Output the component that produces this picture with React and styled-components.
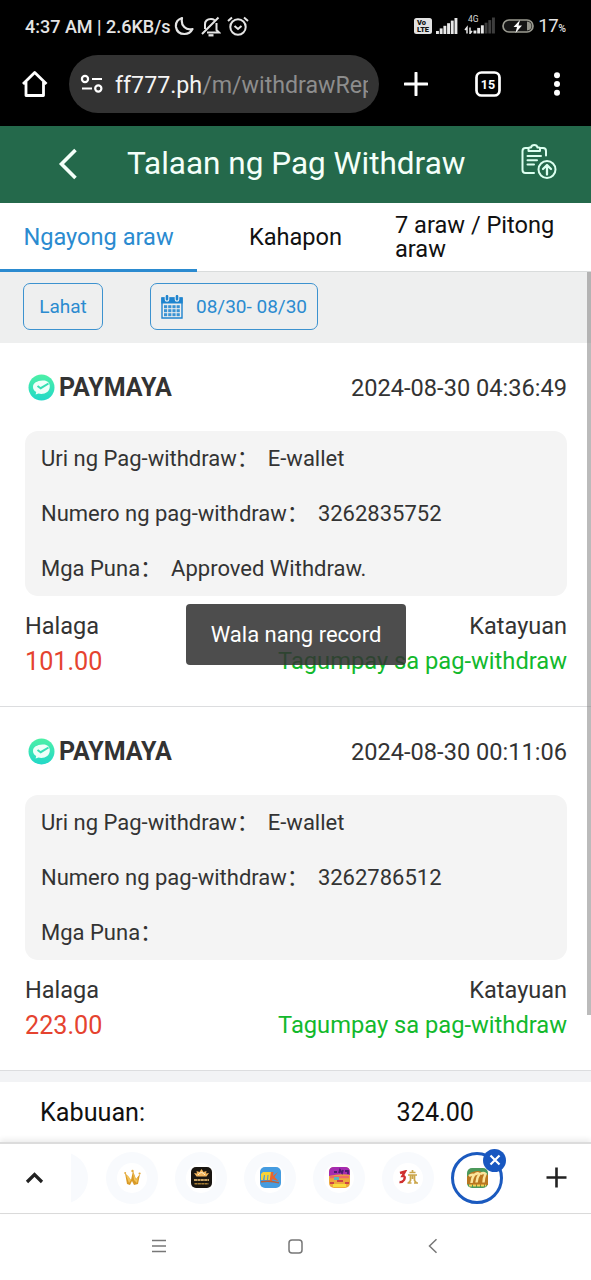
import React from "react";
import styled, { createGlobalStyle } from "styled-components";

const Global = createGlobalStyle`
  * { box-sizing: border-box; }
  body { margin: 0; background: #fff; font-family: Roboto, "Noto Sans CJK SC", sans-serif; }
  svg { display: block; flex: none; }
`;

const Screen = styled.div`
  width: 591px;
  height: 1280px;
  overflow: hidden;
  display: flex;
  flex-direction: column;
  position: relative;
  background: #fff;
  color: #333;
`;

const Text = styled.span`
  font-size: ${(p) => p.$size}px;
  letter-spacing: ${(p) => p.$ls || 0}px;
  color: ${(p) => p.$color || "inherit"};
  font-weight: ${(p) => p.$weight || 400};
  white-space: nowrap;
`;

const StatusBar = styled.div`
  height: 52px;
  flex: none;
  background: #000;
  color: #e4e4e4;
  display: flex;
  align-items: center;
  padding: 0 25px 0 25px;
`;
const StatusIcons = styled.div`
  display: flex;
  align-items: center;
  gap: 6px;
  margin-left: 3px;
`;
const StatusRight = styled.div`
  display: flex;
  align-items: center;
  margin-left: auto;
`;
const BatteryLevel = styled.div`
  display: flex;
  align-items: baseline;
  margin-left: 4px;
`;
const Signal = styled.svg`
  margin-left: ${(p) => p.$gap}px;
  margin-top: ${(p) => p.$lift || 0}px;
`;

const BrowserBar = styled.div`
  height: 74px;
  flex: none;
  background: #000;
  display: flex;
  align-items: center;
  padding: 0 28px 10px 20px;
  color: #fff;
`;
const AddressPill = styled.div`
  width: 310px;
  height: 58px;
  margin-left: 19px;
  border-radius: 29px;
  background: #333;
  display: flex;
  align-items: center;
  padding: 0 11px 0 11px;
`;
const Address = styled.div`
  width: 254px;
  overflow: hidden;
  white-space: nowrap;
  margin-left: 11px;
  font-size: 23.2px;
  line-height: 32px;
  padding-top: 1px;
  color: #8d8d8d;
  b { font-weight: 400; color: #f4f4f4; }
`;
const BrowserActions = styled.div`
  flex: 1;
  display: flex;
  align-items: center;
  padding-left: 25px;
  svg:nth-child(2) { margin-left: 47px; }
  svg:nth-child(3) { margin-left: 50px; }
`;

const AppHeader = styled.header`
  height: 77px;
  flex: none;
  background: #24694b;
  display: flex;
  align-items: center;
  color: #f4fff9;
  padding: 0 34px 2px 58px;
  > svg:last-child { margin-bottom: 4px; }
`;
const Title = styled.h1`
  margin: 0;
  flex: 1;
  padding-left: 49px;
  font-size: 31.5px;
  font-weight: 400;
  white-space: nowrap;
`;

const Tabs = styled.nav`
  height: 69px;
  flex: none;
  display: grid;
  grid-template-columns: repeat(3, 197px);
  border-bottom: 1px solid #d9dcdc;
`;
const Tab = styled.div`
  display: flex;
  align-items: center;
  justify-content: center;
  height: 69px;
  color: ${(p) => (p.$active ? "#2b8bd0" : "#111")};
  border-bottom: 3px solid ${(p) => (p.$active ? "#2b8bd0" : "transparent")};
  padding-top: 3px;
  font-size: 23.6px;
  line-height: 23.5px;
`;
const TabLabel = styled.span`
  width: ${(p) => (p.$wide ? "195px" : "auto")};
`;

const Filters = styled.div`
  height: 71px;
  flex: none;
  background: #eeefef;
  display: flex;
  align-items: flex-start;
  padding: 11px 0 0 23px;
  gap: 47px;
`;
const FilterButton = styled.button`
  width: ${(p) => p.$width}px;
  height: 47px;
  border: 1.3px solid #3c92cf;
  border-radius: 7px;
  background: transparent;
  color: #2b8bd0;
  font: 400 19px Roboto, sans-serif;
  display: flex;
  align-items: center;
  justify-content: center;
  gap: 13px;
  padding: 0;
  white-space: nowrap;
`;

const Record = styled.section`
  height: 364px;
  flex: none;
  padding: 0 24px 0 25px;
  border-bottom: 1px solid #dcdddf;
`;
const RecordHead = styled.div`
  height: 88px;
  display: flex;
  align-items: center;
  justify-content: space-between;
  padding: 1px 0 0 3px;
`;
const Brand = styled.div`
  display: flex;
  align-items: center;
  gap: 4px;
`;
const Details = styled.div`
  background: #f4f4f4;
  border-radius: 13px;
  height: 165px;
  padding-left: 16px;
`;
const Detail = styled.div`
  height: 55px;
  display: flex;
  align-items: center;
  font-size: 22px;
  line-height: 26px;
  white-space: pre;
  span { margin-left: 9px; }
`;
const Summary = styled.div`
  display: flex;
  justify-content: space-between;
  padding-top: 13px;
`;
const SummaryCol = styled.div`
  display: flex;
  flex-direction: column;
  align-items: ${(p) => (p.$end ? "flex-end" : "flex-start")};
  line-height: 35px;
`;

const Total = styled.div`
  height: 71px;
  flex: none;
  border-top: 11px solid #f2f3f5;
  display: flex;
  align-items: center;
  color: #111;
  padding: 1px 117px 0 40px;
  justify-content: space-between;
`;

const TabStrip = styled.div`
  height: 72px;
  flex: none;
  border-top: 2px solid #dcdcdc;
  border-bottom: 1px solid #dadada;
  box-shadow: 0 -3px 5px rgba(0, 0, 0, 0.07);
  display: flex;
  align-items: center;
  padding: 0 0 2px 25px;
  background: #fff;
`;
const Peek = styled.div`
  width: 17px;
  height: 52px;
  margin-left: 27px;
  overflow: hidden;
  display: flex;
  justify-content: flex-end;
`;
const SiteList = styled.div`
  display: flex;
  gap: 17px;
  margin-left: 18px;
`;
const Site = styled.div`
  width: 52px;
  height: 52px;
  flex: none;
  border-radius: 50%;
  position: relative;
  background: ${(p) => (p.$active ? "#fff" : "#f8fafd")};
  border: ${(p) => (p.$active ? "3px solid #1b5abf" : "0")};
  display: flex;
  align-items: center;
  justify-content: center;
`;
const SiteFace = styled.span`
  width: 30px;
  height: 30px;
  border-radius: 50%;
  background: #fff;
  display: flex;
  align-items: center;
  justify-content: center;
`;
const CloseBadge = styled.span`
  position: absolute;
  top: -6px;
  right: -6px;
  width: 23px;
  height: 23px;
  border-radius: 50%;
  background: #1857c0;
  display: flex;
  align-items: center;
  justify-content: center;
`;
const NewTab = styled.div`
  margin-left: 43px;
`;

const SystemNav = styled.div`
  flex: 1;
  display: flex;
  align-items: center;
  padding: 0 152px 2px 151px;
  svg:nth-child(2) { margin-left: 121px; }
  svg:nth-child(3) { margin-left: 125px; }
`;

const Toast = styled.div`
  position: absolute;
  left: 186px;
  top: 604px;
  width: 220px;
  height: 61px;
  border-radius: 4px;
  background: rgba(50, 50, 50, 0.87);
  color: #fff;
  display: flex;
  align-items: center;
  justify-content: center;
`;
const ScrollThumb = styled.div`
  position: absolute;
  right: 0;
  top: 272px;
  width: 4px;
  height: 743px;
  background: rgba(120, 120, 120, 0.5);
`;

const PayMark = () => (
  <svg width="27" height="27" viewBox="0 0 27 27">
    <defs>
      <linearGradient id="pay" x1="0" y1="0" x2="0" y2="1">
        <stop offset="0" stopColor="#4df0a6" />
        <stop offset="1" stopColor="#22d8c8" />
      </linearGradient>
    </defs>
    <circle cx="13.5" cy="13.5" r="13" fill="url(#pay)" />
    <path d="M14.500 6.500c4.500-.4 7.300 2 7.300 5.800 0 5-4 7.700-8.500 7.700-1 0-2 0-2.800-.4L7.600 20.500l.6-2.500C6 16.800 5 15 5 13c0-4 4-6.200 9.500-6.500z" fill="#effff9" />
    <path d="M9.500 12l3.200 2.200L20.500 9.500" fill="none" stroke="#35dfb4" strokeWidth="2" />
  </svg>
);

const CalendarIcon = () => (
  <svg width="22" height="24" viewBox="0 0 22 24">
    <path d="M1 3h20v20H1z" fill="none" stroke="#1e84cf" strokeWidth="1.4" />
    <path d="M.3 2.500h21.400V8.500H.3z" fill="#1e84cf" />
    <path d="M6 0v4.500M16 0v4.500" stroke="#eeefef" strokeWidth="4.600" strokeLinecap="round" />
    <path d="M6 1.200v3M16 1.200v3" stroke="#1e84cf" strokeWidth="2.600" strokeLinecap="round" />
    {[10.2, 14.2, 18.2].map((y) =>
      [3, 7.2, 11.4, 15.6].map((x) => (
        <rect key={`${x}-${y}`} x={x} y={y} width="3.200" height="3" fill="#3992d3" />
      ))
    )}
  </svg>
);

const HistoryIcon = () => (
  <svg width="36" height="36" viewBox="0 0 36 36" fill="none" stroke="#dcfff0" strokeWidth="2" strokeLinecap="round" strokeLinejoin="round">
    <path d="M7.500 4H4.500Q1.500 4 1.500 7V26Q1.500 29 4.500 29H13M19 4h3Q25 4 25 7V11.500" />
    <path d="M7.500 7V4.500q0-1 1-1h1.500Q10.500 1 13.300 1T16.500 3.500H18q1 0 1 1V7z" />
    <path d="M6.500 12H20M6.500 16.200H16M6.500 20.500H13" />
    <circle cx="26" cy="25.500" r="8.500" />
    <path d="M26 30.500V21.500M22 25l4-4 4 4" strokeWidth="2.300" />
  </svg>
);

const bars = (fade) => [0, 1, 2, 3, 4, 5].map((i) => (
  <rect key={i} x={i * 3.7} y={14 - i * 2.6} width="2.900" height={3 + i * 2.6} fill={fade && i > 2 ? "#3d3d3d" : "#e8e8e8"} />
));

const icons = {
  crown: (
    <svg width="17" height="17" viewBox="0 0 17 17">
      <path d="M1 4l3 3 3 4 2-9 3 8 4-5-2 10-4 1-2-4-2 4-3-1z" fill="#d99a27" />
      <path d="M2 6l3 8 2-3-3-4zM9 3l1 8 3 3 1-6-2 3z" fill="#f2c45a" />
      <circle cx="8.500" cy="2" r="1.200" fill="#e3a93b" />
      <circle cx="1.200" cy="4" r="1" fill="#e3a93b" />
      <circle cx="15.600" cy="4.500" r="1.100" fill="#e3a93b" />
    </svg>
  ),
  lotus: (
    <svg width="21" height="21" viewBox="0 0 21 21">
      <rect width="21" height="21" rx="5" fill="#1a1611" />
      <path d="M10.500 2l2 3 3-1-.5 2.500 3-.5-2.500 3.500H5.500L3 6l3 .5L5.500 4l3 1z" fill="#f1b45d" />
      <path d="M7 8q3.500-5 7 0" fill="none" stroke="#fff0ce" />
      <path d="M3 13h15" stroke="#c7a264" strokeWidth="1.800" strokeDasharray="3 .4" />
      <path d="M3.500 16.800h14" stroke="#a57d35" strokeWidth="1.600" strokeDasharray="3 .4" />
    </svg>
  ),
  mk: (
    <svg width="21" height="21" viewBox="0 0 21 21">
      <rect width="21" height="21" rx="5" fill="#459ce0" />
      <path d="M1 7l2-2h8l-.5 8H8l.5-5H7.500L7 13H4.500L5 8H4l-1 5H1z" fill="#f9d335" />
      <path d="M11 5h2.500l-.5 4L18 5l-3.500 5 4.500 4.500-5.500-2-1-1-.5 3H9.500z" fill="#e8652d" />
      <path d="M1 14.800q9-1.500 18 1" fill="none" stroke="#bd5e35" strokeWidth="1.400" />
    </svg>
  ),
  fiesta: (
    <svg width="21" height="21" viewBox="0 0 21 21">
      <rect width="21" height="21" rx="5" fill="#eda83b" />
      <path d="M0 9V5q0-5 5-5h11q5 0 5 5v3q-9-2-21 1z" fill="#a52bb0" />
      <path d="M5 5h3M10 6l1-3 2 3 1-3M16 4h3v3" fill="none" stroke="#4c1a70" strokeWidth="1.800" />
      <path d="M1 10h19" stroke="#ef6a68" strokeWidth="2.500" />
      <path d="M5 10h5v3H5z" fill="#58b9bd" />
      <path d="M1 16h4M16 16h4M8 14h6" stroke="#ce4344" strokeWidth="2" />
      <path d="M4 18.500h13" stroke="#f9dc3d" strokeWidth="3" />
    </svg>
  ),
  three: (
    <svg width="21" height="15" viewBox="0 0 21 15">
      <path d="M2 3l5-1.500L4.500 6q3.500-.2 1.500 4-1.500 2.500-4.500 2" fill="none" stroke="#cf2f2f" strokeWidth="2.400" />
      <path d="M10 5h9M11.500 2.500h6M14.500 0v3M12.500 5v5.500l-2 2.500M16.500 5v5.500l2 2.500M9.500 13h4M16 13h4M14.500 5v4" stroke="#cba64b" strokeWidth="1.700" fill="none" />
    </svg>
  ),
  sevens: (
    <svg width="21" height="20" viewBox="0 0 21 20">
      <rect width="21" height="20" rx="5" fill="#4b995b" />
      <path d="M0 9q4-7 12-6l9 4v10q-10 2-21-1z" fill="#b97720" />
      <path d="M2 8q2.500-2 5-1Q5 10 4.500 15M8 6.500q2-2 4.500-.5Q10 9 9.500 14.500M13.500 6q3-2 5 0-2 4-2 8.500" fill="none" stroke="#fbe59c" strokeWidth="2.500" />
      <path d="M2 17.500h17" stroke="#f3d258" strokeWidth="1.800" strokeDasharray="3 1" />
    </svg>
  ),
};

const records = [
  { time: "2024-08-30 04:36:49", number: "3262835752", note: "Approved Withdraw.", amount: "101.00" },
  { time: "2024-08-30 00:11:06", number: "3262786512", note: "", amount: "223.00" },
];

export default function App() {
  return (
    <Screen>
      <Global />
      <StatusBar>
        <Text $size={18} $weight={500}>4:37 AM | 2.6KB/s</Text>
        <StatusIcons>
          <svg width="21" height="20" viewBox="0 0 21 20" fill="none" stroke="#e4e4e4" strokeWidth="2.200" strokeLinejoin="round">
            <path d="M8 2C3.500 3.500 1.500 7 2 11c.7 4.500 4.200 7 8.500 7 3.500 0 6.500-2 8-5C12 14.500 6.500 10 8 2z" />
          </svg>
          <svg width="20" height="21" viewBox="0 0 20 21" fill="none" stroke="#e4e4e4" strokeWidth="2">
            <path d="M1 18L17.500 1.500M4 13V8.500Q4 3 10 3q2 0 3.500 1M15.500 7v7l2.500 2.500H6" />
            <path d="M7.500 19.300h5" strokeWidth="2.300" />
          </svg>
          <svg width="22" height="20" viewBox="0 0 22 20" fill="none" stroke="#e4e4e4" strokeWidth="2">
            <circle cx="11" cy="11" r="7.700" />
            <path d="M1 5l4-3.500M21 5l-4-3.500M7.500 10l3.500 3 3.500-3" />
          </svg>
        </StatusIcons>
        <StatusRight>
          <svg width="18" height="16" viewBox="0 0 18 16">
            <rect width="18" height="16" rx="2.500" fill="#e2e2e2" />
            <text x="3" y="7.200" fontSize="7.500" fontWeight="900" fontFamily="Roboto" fill="#111">Vo</text>
            <text x="3" y="14" fontSize="7.500" fontWeight="900" fontFamily="Roboto" fill="#111" textLength="12">LTE</text>
          </svg>
          <Signal $gap={4} $lift={-2} width="22" height="17" viewBox="0 0 22 17">{bars(false)}</Signal>
          <Signal $gap={6} $lift={-4} width="32" height="20" viewBox="0 0 32 20">
            <g transform="translate(9.500 2.500)">{bars(true)}</g>
            <rect x="3" y="0" width="12" height="9" fill="#000" />
            <text x="4" y="7.500" fontSize="8.500" fontFamily="Roboto" fill="#d8d8d8">4G</text>
            <path d="M3 19.500v-6l-2 2.500M6 13.500v6l2-2.500" stroke="#e8e8e8" strokeWidth="1.500" fill="none" />
          </Signal>
          <Signal $gap={6} width="32" height="14" viewBox="0 0 32 14">
            <rect x="1" y="1" width="30" height="12" rx="6" fill="#151515" stroke="#9a9a90" strokeWidth="1.700" />
            <path d="M25 2.500q4.500.5 4.500 4.500T25 11.500z" fill="#96968d" />
            <path d="M18 1l-6.500 7H15l-1.500 6L20 6.500h-3.500z" fill="#fff" />
          </Signal>
          <BatteryLevel>
            <Text $size={18.5} $ls={-0.4}>17</Text>
            <Text $size={10.5} $weight={500}>%</Text>
          </BatteryLevel>
        </StatusRight>
      </StatusBar>

      <BrowserBar>
        <svg width="30" height="30" viewBox="0 0 30 30" fill="none" stroke="#fff" strokeWidth="2.800" strokeLinejoin="round">
          <path d="M3 15L14.700 3.500 26.500 15M6 13v13.500h17.500V13" />
        </svg>
        <AddressPill>
          <svg width="24" height="20" viewBox="0 0 24 20" fill="none" stroke="#fff" strokeWidth="2.200">
            <circle cx="5" cy="5" r="3.100" /><path d="M12 5h10M2 14.500h10" /><circle cx="18.300" cy="14.500" r="3.100" />
          </svg>
          <Address><b>ff777.ph</b>/m/withdrawReport</Address>
        </AddressPill>
        <BrowserActions>
          <svg width="24" height="24" viewBox="0 0 24 24" stroke="#fff" strokeWidth="3"><path d="M12 1v22M1 12h22" strokeLinecap="round" /></svg>
          <svg width="26" height="26" viewBox="0 0 26 26">
            <rect x="1.500" y="1.500" width="23" height="23" rx="5" fill="none" stroke="#fff" strokeWidth="2.700" />
            <text x="13" y="17.500" textAnchor="middle" fontFamily="Roboto" fontWeight="700" fontSize="12.500" fill="#fff">15</text>
          </svg>
          <svg width="12" height="24" viewBox="0 0 12 24" fill="#fff"><circle cx="6" cy="3.200" r="3" /><circle cx="6" cy="12" r="3" /><circle cx="6" cy="20.800" r="3" /></svg>
        </BrowserActions>
      </BrowserBar>

      <AppHeader>
        <svg width="20" height="32" viewBox="0 0 20 32" fill="none" stroke="#f4fff9" strokeWidth="3.600"><path d="M17.500 2L3.500 16l14 14" /></svg>
        <Title>Talaan ng Pag Withdraw</Title>
        <HistoryIcon />
      </AppHeader>

      <Tabs>
        <Tab $active><TabLabel>Ngayong araw</TabLabel></Tab>
        <Tab><TabLabel>Kahapon</TabLabel></Tab>
        <Tab><TabLabel $wide>7 araw / Pitong araw</TabLabel></Tab>
      </Tabs>

      <Filters>
        <FilterButton $width={80}>Lahat</FilterButton>
        <FilterButton $width={168}><CalendarIcon />08/30- 08/30</FilterButton>
      </Filters>

      {records.map((r) => (
        <Record key={r.number}>
          <RecordHead>
            <Brand><PayMark /><Text $size={25} $weight={700}>PAYMAYA</Text></Brand>
            <Text $size={23.6}>{r.time}</Text>
          </RecordHead>
          <Details>
            <Detail>Uri ng Pag-withdraw：<span>E-wallet</span></Detail>
            <Detail>Numero ng pag-withdraw：<span>{r.number}</span></Detail>
            <Detail>Mga Puna：<span>{r.note}</span></Detail>
          </Details>
          <Summary>
            <SummaryCol>
              <Text $size={23.5}>Halaga</Text>
              <Text $size={25.2} $color="#e5432f">{r.amount}</Text>
            </SummaryCol>
            <SummaryCol $end>
              <Text $size={23.5}>Katayuan</Text>
              <Text $size={23.7} $color="#12b92c">Tagumpay sa pag-withdraw</Text>
            </SummaryCol>
          </Summary>
        </Record>
      ))}

      <Total>
        <Text $size={25.2}>Kabuuan:</Text>
        <Text $size={25.2}>324.00</Text>
      </Total>

      <TabStrip>
        <svg width="19" height="13" viewBox="0 0 19 13" fill="none" stroke="#222" strokeWidth="3.200"><path d="M2 11l7.500-7.500L17 11" /></svg>
        <Peek><Site /></Peek>
        <SiteList>
          {["crown", "lotus", "mk", "fiesta", "three"].map((k) => (
            <Site key={k}><SiteFace>{icons[k]}</SiteFace></Site>
          ))}
          <Site $active>
            {icons.sevens}
            <CloseBadge>
              <svg width="12" height="12" viewBox="0 0 12 12" stroke="#fff" strokeWidth="2.200"><path d="M1.500 1.500l9 9M10.500 1.500l-9 9" /></svg>
            </CloseBadge>
          </Site>
        </SiteList>
        <NewTab>
          <svg width="21" height="21" viewBox="0 0 21 21" stroke="#222" strokeWidth="2.600"><path d="M10.500 .5v20M.5 10.500h20" /></svg>
        </NewTab>
      </TabStrip>

      <SystemNav>
        <svg width="16" height="14" viewBox="0 0 16 14" stroke="#777" strokeWidth="1.500"><path d="M1 1.500h14M1 7h14M1 12.500h14" /></svg>
        <svg width="15" height="15" viewBox="0 0 15 15" fill="none" stroke="#777" strokeWidth="1.500"><rect x="1" y="1" width="13" height="13" rx="3" /></svg>
        <svg width="10" height="16" viewBox="0 0 10 16" fill="none" stroke="#777" strokeWidth="1.500"><path d="M8.500 1.200L1.500 8l7 6.800" /></svg>
      </SystemNav>

      <ScrollThumb />
      <Toast><Text $size={22}>Wala nang record</Text></Toast>
    </Screen>
  );
}
